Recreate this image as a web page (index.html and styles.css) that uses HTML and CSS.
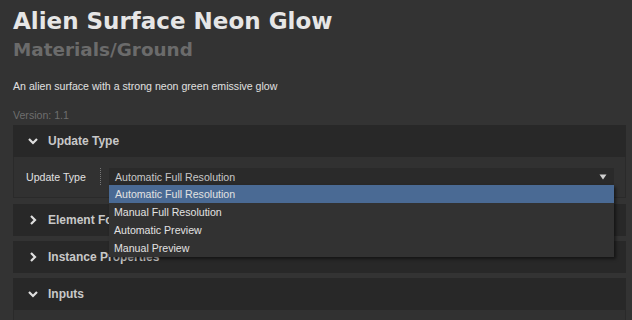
FILE: index.html
```html
<!DOCTYPE html>
<html lang="en">
<head>
    <meta charset="UTF-8">
    <title>Alien Surface Neon Glow</title>
    <link rel="stylesheet" href="styles.css">
</head>
<body>

    <!-- Asset Header -->
    <header class="asset-head">
        <h1>Alien Surface Neon Glow</h1>
        <h2>Materials/Ground</h2>
        <p class="desc">An alien surface with a strong neon green emissive glow</p>
        <p class="version">Version: 1.1</p>
    </header>

    <!-- Update Type -->
    <section class="panel open">
        <div class="panel-head">
            <svg class="chev" width="12" height="12" viewBox="0 0 12 12"><path d="M2 4 L6 8 L10 4" /></svg>
            <span>Update Type</span>
        </div>
        <div class="panel-body">
            <div class="row">
                <label class="row-label">Update Type</label>
                <span class="sep"></span>
                <div class="select">
                    <span>Automatic Full Resolution</span>
                    <svg class="arrow" width="8" height="6" viewBox="0 0 8 6"><path d="M0.5 0.5 H7.5 L4 5.5 Z" /></svg>
                    <ul class="options">
                        <li class="active">Automatic Full Resolution</li>
                        <li>Manual Full Resolution</li>
                        <li>Automatic Preview</li>
                        <li>Manual Preview</li>
                    </ul>
                </div>
            </div>
        </div>
    </section>

    <!-- Element Format -->
    <section class="panel">
        <div class="panel-head">
            <svg class="chev" width="12" height="12" viewBox="0 0 12 12"><path d="M4 2 L8 6 L4 10" /></svg>
            <span>Element Format</span>
        </div>
    </section>

    <!-- Instance Properties -->
    <section class="panel">
        <div class="panel-head">
            <svg class="chev" width="12" height="12" viewBox="0 0 12 12"><path d="M4 2 L8 6 L4 10" /></svg>
            <span>Instance Properties</span>
        </div>
    </section>

    <!-- Inputs -->
    <section class="panel open">
        <div class="panel-head">
            <svg class="chev" width="12" height="12" viewBox="0 0 12 12"><path d="M2 4 L6 8 L10 4" /></svg>
            <span>Inputs</span>
        </div>
        <div class="panel-body tall"></div>
    </section>

</body>
</html>
```

FILE: styles.css
```css
/* Global Styles */
* {
    margin: 0;
    padding: 0;
    box-sizing: border-box;
}

body {
    font-family: 'Liberation Sans', Arial, sans-serif;
    font-size: 10.6px;
    background-color: #333333;
    color: #dddddd;
    padding: 0 6px 0 13px;
    overflow: hidden;
}

/* Asset header */
.asset-head h1 {
    font-family: 'DejaVu Sans', sans-serif;
    font-size: 23px;
    font-weight: bold;
    color: #e6e6e6;
    line-height: 28px;
    padding-top: 7px;
}

.asset-head h2 {
    font-family: 'DejaVu Sans', sans-serif;
    font-size: 18.4px;
    font-weight: bold;
    color: #6b6b6b;
    line-height: 24px;
    margin-top: 3px;
}

.desc {
    margin-top: 18px;
    line-height: 12px;
    color: #e0e0e0;
}

.version {
    margin-top: 16px;
    color: #6e6e6e;
    line-height: 14px;
}

/* Panels */
.panel {
    margin-top: 5px;
}

.asset-head + .panel {
    margin-top: 3px;
}

.panel.open + .panel {
    margin-top: 6px;
}

.panel-head {
    height: 32px;
    background-color: #282828;
    display: flex;
    align-items: center;
    padding-left: 14px;
    font-size: 12px;
    font-weight: bold;
    color: #c8c8c8;
}

.panel-head span {
    margin-left: 9px;
}

.chev path {
    fill: none;
    stroke: #e0e0e0;
    stroke-width: 2.2;
}

.panel-body {
    background-color: #313131;
    border: 1px solid #2a2a2a;
    border-top: none;
    padding: 11px 11px 12px 12px;
}

.panel-body.tall {
    height: 40px;
}

.row {
    display: flex;
    align-items: center;
    height: 17px;
}

.row-label {
    width: 74px;
    color: #e0e0e0;
}

.sep {
    width: 1px;
    height: 17px;
    border-left: 1px dotted #777;
    margin-right: 8px;
}

/* Select */
.select {
    position: relative;
    flex: 1;
    height: 17px;
    background-color: #2a2a2a;
    display: flex;
    align-items: center;
    justify-content: space-between;
    padding: 0 7px 0 6px;
    color: #c8c8c8;
}

.arrow path {
    fill: #d0d0d0;
}

.options {
    position: absolute;
    top: 17px;
    left: 0;
    right: 0;
    list-style: none;
    background-color: #323232;
    box-shadow: 2px 2px 3px rgba(0, 0, 0, 0.5);
    z-index: 2;
}

.options li {
    height: 18px;
    line-height: 18px;
    padding-left: 5px;
    color: #e2e2e2;
}

.options li.active {
    background-color: #4a6a94;
    padding-left: 6px;
}
```
